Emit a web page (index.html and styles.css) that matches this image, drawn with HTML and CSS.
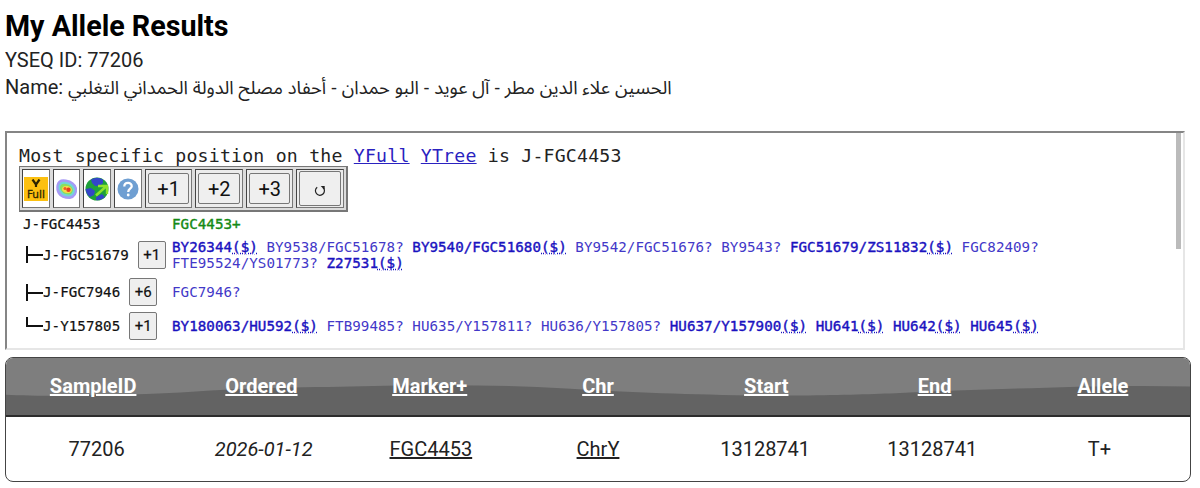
FILE: index.html
```
<!DOCTYPE html>
<html lang="en">
<head>
    <meta charset="utf-8">
    <title>My Allele Results</title>
    <link rel="stylesheet" href="styles.css">
</head>
<body>
    <div class="person">
        <h1>My Allele Results</h1>
        <p>YSEQ ID: 77206</p>
        <p>Name: <bdi class="name" dir="rtl" lang="ar">الحسين علاء الدين مطر - آل عويد - البو حمدان - أحفاد مصلح الدولة الحمداني التغلبي</bdi></p>
    </div>

    <div class="frame">
        <div class="scrollbar"></div>
        <p class="position">Most specific position on the <a href="#">YFull</a> <a href="#">YTree</a> is J-FGC4453</p>

        <div class="toolbar">
            <div class="cell icon">
                <div class="yfull">
                    <svg width="10" height="9" viewBox="0 0 10 9"><path d="M1.500 0.500 L5 5.500 L8.500 0.500 M5 4 V8" fill="none" stroke="#2b2400" stroke-width="2.200"/></svg>
                    <span>Full</span>
                </div>
            </div>
            <div class="cell icon">
                <svg width="24" height="24" viewBox="0 0 24 24">
                    <path d="M1.500 8 Q3 1 11 2.500 Q20 4 22 11 Q23 20 15 22 Q6 22 3 17 Q0.500 13 1.500 8Z" fill="#a79af5"/>
                    <path d="M3.500 9 Q5 4 11 5 Q18 6 20 12 Q20 19 14 19.500 Q7 19.500 5 15 Q3 12 3.500 9Z" fill="#71d5d8"/>
                    <path d="M5 10 Q6 6 11 7 Q17 8 18 13 Q17 18 13 17.500 Q8 17 6.500 14 Q4.500 12 5 10Z" fill="#8be05a"/>
                    <ellipse cx="12" cy="12.500" rx="5" ry="3.500" fill="#f6d84a" transform="rotate(12 12 12)"/>
                    <circle cx="10" cy="11.500" r="1.500" fill="#ef5b25"/>
                    <circle cx="13.500" cy="12.800" r="2.200" fill="#e63a1e"/>
                </svg>
            </div>
            <div class="cell icon">
                <svg width="24" height="24" viewBox="0 0 24 24">
                    <circle cx="12" cy="12" r="11.500" fill="#1ea03a"/>
                    <path d="M6 2.500 Q12 -1 18 2.500 L18 6 L15 9 L10 9 L7 6Z" fill="#3345c8"/>
                    <path d="M0.500 12 L6 11 L10 14 L9 18 L5 20 Q1 17 0.500 12Z M11 20 L17 17 L20 20 Q16 24 11 23Z" fill="#3345c8"/>
                    <path d="M11 18.500 L21 9.500 M13 9 H22 V17" fill="none" stroke="#8ee32a" stroke-width="2.400"/>
                </svg>
            </div>
            <div class="cell icon">
                <svg width="22" height="22" viewBox="0 0 22 22">
                    <circle cx="11" cy="11" r="10.500" fill="#6f9fd2"/>
                    <path d="M7.300 8.500 C7.300 3.800 15 3.800 14.700 8.400 C14.500 10.800 11.200 10.800 11.200 14" fill="none" stroke="#fff" stroke-width="2.300"/>
                    <circle cx="11.200" cy="17" r="1.400" fill="#fff"/>
                </svg>
            </div>
            <div class="cell"><button>+1</button></div>
            <div class="cell"><button>+2</button></div>
            <div class="cell"><button>+3</button></div>
            <div class="cell reload">
                <button>
                    <svg width="12" height="12" viewBox="0 0 12 12"><path d="M3.200 2.200 A4.500 4.500 0 1 0 9 2.500" fill="none" stroke="#222" stroke-width="1.200"/><path d="M6.700 1 H10.700 V5Z" fill="#222"/></svg>
                </button>
            </div>
        </div>

        <div class="tree">
            <div class="row root">
                <div class="node">J-FGC4453</div>
                <div class="snps positive">FGC4453+</div>
            </div>
            <div class="row tall">
                <div class="node"><span class="branch mid"></span>J-FGC51679 <button>+1</button></div>
                <div class="snps"><b>BY26344<u>($)</u></b> BY9538/FGC51678? <b>BY9540/FGC51680<u>($)</u></b> BY9542/FGC51676? BY9543? <b>FGC51679/ZS11832<u>($)</u></b> FGC82409?<br>FTE95524/YS01773? <b>Z27531<u>($)</u></b></div>
            </div>
            <div class="row">
                <div class="node"><span class="branch mid"></span>J-FGC7946 <button>+6</button></div>
                <div class="snps">FGC7946?</div>
            </div>
            <div class="row">
                <div class="node"><span class="branch last"></span>J-Y157805 <button>+1</button></div>
                <div class="snps"><b>BY180063/HU592<u>($)</u></b> FTB99485? HU635/Y157811? HU636/Y157805? <b>HU637/Y157900<u>($)</u></b> <b>HU641<u>($)</u></b> <b>HU642<u>($)</u></b> <b>HU645<u>($)</u></b></div>
            </div>
        </div>
    </div>

    <div class="results">
        <div class="results-head">
            <svg class="wave" viewBox="0 0 1184 56" preserveAspectRatio="none"><path d="M0 36 C40 38 130 37 190 33 C240 29 300 29 345 28 C420 26 490 26 560 30 C630 34 680 36 760 37 C860 37 900 34 950 32 C1020 30 1100 26 1184 28 V56 H0Z" fill="#636363"/></svg>
            <a href="#">SampleID</a>
            <a href="#">Ordered</a>
            <a href="#">Marker+</a>
            <a href="#">Chr</a>
            <a href="#">Start</a>
            <a href="#">End</a>
            <a href="#">Allele</a>
        </div>
        <div class="results-row">
            <span>77206</span>
            <em>2026-01-12</em>
            <a href="#">FGC4453</a>
            <a href="#">ChrY</a>
            <span>13128741</span>
            <span>13128741</span>
            <span>T+</span>
        </div>
    </div>
</body>
</html>
```
FILE: styles.css
```
* {
    box-sizing: border-box;
}

body {
    margin: 0;
    padding: 0 9px 0 5px;
    height: 488px;
    overflow: hidden;
    background: #fff;
    color: #222;
    font-family: Roboto, sans-serif;
    font-size: 20px;
}

h1, p {
    margin: 0;
}

.person {
    height: 131px;
    padding-top: 5px;
}

.person h1 {
    color: #000;
    font-size: 28.7px;
    line-height: 42px;
    font-weight: bold;
}

.person p {
    line-height: 27px;
    white-space: nowrap;
}

.name {
    font-family: "Noto Sans Arabic", "DejaVu Sans", sans-serif;
    font-size: 18.4px;
}

/* tree frame */
.frame {
    position: relative;
    width: 1180px;
    height: 219px;
    padding: 12px 12px 0;
    border: 2px solid #e6e6e6;
    border-top-color: #858585;
    border-left-color: #858585;
    font-family: "DejaVu Sans Mono", monospace;
}

.scrollbar {
    position: absolute;
    top: 0;
    right: 2px;
    width: 5px;
    height: 116px;
    background: #bbb;
}

.position {
    font-size: 18.2px;
    letter-spacing: 0.21px;
    line-height: 21px;
    white-space: nowrap;
}

.position a {
    color: #2a22c0;
}

.toolbar {
    display: flex;
    gap: 3px;
    width: 329px;
    height: 46px;
    padding: 2px;
    border: 1px solid #777;
    border-right-width: 2px;
    border-bottom-width: 2px;
    background: #dcdcdc;
}

.cell {
    display: flex;
    align-items: center;
    justify-content: center;
    width: 48px;
    height: 39px;
    padding: 2px;
    border: 1px solid #777;
    border-top-color: #444;
    border-left-color: #444;
    background: #ececec;
}

.cell.icon {
    width: 28px;
    padding: 0;
    background: #fff;
}

.cell button {
    display: flex;
    align-items: center;
    justify-content: center;
    width: 100%;
    height: 31px;
}

.cell.reload button {
    height: 35px;
    padding-top: 4px;
}

button {
    padding: 0;
    border: 1px solid #777;
    border-radius: 2px;
    background: #efefef;
    color: #111;
    font-family: Roboto, sans-serif;
    font-size: 20px;
}

.yfull {
    display: flex;
    flex-direction: column;
    align-items: center;
    width: 24px;
    height: 24px;
    padding-top: 2px;
    background: #fcc010;
    color: #2b2400;
    font: 10.5px/12px "DejaVu Sans", sans-serif;
    -webkit-text-stroke: 0.3px #2b2400;
}

/* haplogroup rows */
.tree {
    padding: 2px 0 0 4px;
    font-size: 14.2px;
    letter-spacing: 0.04px;
}

.row {
    display: flex;
    align-items: center;
    height: 34px;
}

.row.root {
    height: 20px;
}

.row.tall {
    height: 41px;
}

.node {
    display: flex;
    align-items: center;
    width: 149px;
    color: #111;
    -webkit-text-stroke: 0.2px #111;
}

.node button {
    width: 28px;
    height: 28px;
    margin-left: 9px;
    font-size: 15px;
}

.branch {
    position: relative;
    width: 17px;
    height: 17px;
    margin-left: 3px;
    border-left: 2px solid #111;
}

.branch::after {
    content: "";
    position: absolute;
    top: 8px;
    left: 0;
    width: 15px;
    height: 2px;
    background: #111;
}

.branch.last {
    height: 10px;
    margin-bottom: 8px;
}

.snps {
    color: #4338c8;
    line-height: 16px;
    white-space: nowrap;
}

.snps b {
    color: #1a12c0;
    font-weight: normal;
    -webkit-text-stroke: 0.4px #1a12c0;
}

.snps u {
    text-decoration: underline dotted;
}

.snps.positive {
    color: #158a15;
    -webkit-text-stroke: 0.4px #158a15;
}

/* results table */
.results {
    width: 1186px;
    height: 125px;
    margin-top: 7px;
    border: 1px solid #444;
    border-radius: 8px;
    overflow: hidden;
}

.results-head,
.results-row {
    display: grid;
    grid-template-columns: repeat(7, 1fr);
    align-items: center;
    justify-items: center;
}

.results-head {
    position: relative;
    height: 59px;
    padding: 0 3px 1px;
    border-bottom: 2px solid #2c2c2c;
    background: #7e7e7e;
    font-weight: bold;
}

.results-head a {
    position: relative;
    color: #fff;
}

.wave {
    position: absolute;
    top: 0;
    left: 0;
    width: 100%;
    height: 100%;
}

.results-row {
    height: 64px;
    padding: 0 7px;
}

.results-row a {
    color: #222;
}
```
